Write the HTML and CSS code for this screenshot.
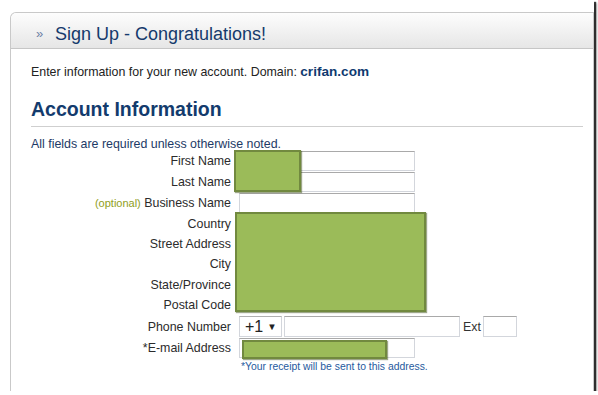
FILE: index.html
```html
<!DOCTYPE html>
<html lang="en">
<head>
    <meta charset="UTF-8">
    <meta name="viewport" content="width=device-width, initial-scale=1.0">
    <title>Sign Up - Congratulations!</title>
    <link rel="stylesheet" href="styles.css">
</head>
<body>
    <div class="shot">
        <div class="card">
            <div class="head">
                <span class="raquo">&raquo;</span>
                <h1>Sign Up - Congratulations!</h1>
            </div>
            <div class="body">
                <p class="intro">Enter information for your new account. Domain: <b>crifan.com</b></p>
                <h2>Account Information</h2>
                <p class="note">All fields are required unless otherwise noted.</p>

                <div class="form">
                    <label>First Name</label><div class="field"><input type="text"></div>
                    <label>Last Name</label><div class="field"><input type="text"></div>
                    <label><small>(optional)</small> Business Name</label><div class="field"><input type="text"></div>
                    <label class="low">Country</label><div class="field low"></div>
                    <label class="low">Street Address</label><div class="field low"></div>
                    <label class="low">City</label><div class="field low"></div>
                    <label class="low">State/Province</label><div class="field low"></div>
                    <label class="low">Postal Code</label><div class="field low"></div>
                    <label class="phone">Phone Number</label>
                    <div class="field phone">
                        <span class="select">+1 <i>&#9660;</i></span>
                        <input type="text" class="num">
                        <span class="ext">Ext</span>
                        <input type="text" class="extbox">
                    </div>
                    <label>*E-mail Address</label><div class="field"><input type="text"></div>
                    <span></span><div class="hint">*Your receipt will be sent to this address.</div>
                </div>
            </div>

            <!-- blanked out parts of the shot -->
            <div class="blank b1"></div>
            <div class="blank b2"></div>
            <div class="blank b3"></div>
        </div>
    </div>
</body>
</html>
```

FILE: styles.css
```css
*{
    margin: 0;
    padding: 0;
    box-sizing: border-box;
}
body{
    background: #fff;
    font-family: "Liberation Sans", Arial, sans-serif;
    font-size: 12.4px;
    color: #222;
}
.shot{
    width: 594px;
    height: 391px;
    overflow: hidden;
    padding: 12px 0 0 10px;
    background: #fff;
    box-shadow: 2px 2px 1px rgba(0,0,0,.75), 3px 3px 2px rgba(0,0,0,.3);
}
.card{
    position: relative;
    height: 400px;
    border: 1px solid #c9c9c9;
    border-bottom: 0;
    border-radius: 6px 0 0 0;
}
.head{
    display: flex;
    align-items: center;
    height: 36px;
    padding: 7px 0 0 25px;
    border-bottom: 1px solid #c6c6c6;
    border-radius: 6px 0 0 0;
    background: linear-gradient(#fdfdfd, #e6e6e6);
}
.raquo{
    color: #6d80a6;
    font-size: 13px;
    width: 19px;
    margin-top: -2px;
}
.head h1{
    font-size: 18px;
    font-weight: normal;
    color: #153a6c;
}
.body{
    padding: 15px 10px 0 20px;
}
.intro{
    line-height: 16px;
}
.intro b{
    color: #0f3a70;
    font-size: 13.6px;
}
h2{
    margin-top: 17px;
    padding-bottom: 5px;
    border-bottom: 1px solid #cfcfcf;
    font-size: 19.5px;
    line-height: 24px;
    color: #133b6d;
}
.note{
    margin-top: 10px;
    line-height: 14px;
    color: #1d3a66;
}
.form{
    display: grid;
    grid-template-columns: 200px 1fr;
    column-gap: 8px;
}
.form label{
    height: 21px;
    line-height: 21px;
    text-align: right;
    color: #2b2b2b;
}
.form label small{
    font-size: 11px;
    color: #8f9e22;
}
.field{
    height: 21px;
    padding-bottom: 1px;
    display: flex;
    align-items: center;
}
.form .low{
    height: 20.2px;
    line-height: 20.2px;
}
.form .phone{
    height: 21px;
    margin-top: 2px;
}
input{
    width: 176px;
    height: 20px;
    border: 1px solid #d3d6dc;
    border-top-color: #a9a9a9;
    font: inherit;
    background: #fff;
}
.select{
    display: flex;
    align-items: center;
    width: 43px;
    height: 21px;
    padding-left: 5px;
    border: 1px solid #d3d6dc;
    border-top-color: #b0b0b0;
    font-size: 16px;
    color: #222;
}
.select i{
    font-style: normal;
    font-size: 9.5px;
    margin-left: 4px;
}
.num{
    width: 176px;
    height: 21px;
    margin-left: 2px;
}
.ext{
    margin: 0 2px 0 3px;
    font-size: 12.4px;
    color: #333;
}
.extbox{
    width: 34px;
    height: 21px;
}
.hint{
    padding: 2px 0 0 2px;
    font-size: 10.4px;
    color: #1f5a9e;
}
.blank{
    position: absolute;
    background: #9bbb59;
    border: 2px solid #71893f;
    box-shadow: 1px 1px 1px rgba(60,80,20,.5);
}
.b1{
    left: 223px;
    top: 137px;
    width: 67px;
    height: 42px;
}
.b2{
    left: 224px;
    top: 199px;
    width: 191px;
    height: 100px;
}
.b3{
    left: 231px;
    top: 327px;
    width: 145px;
    height: 19px;
}
```
